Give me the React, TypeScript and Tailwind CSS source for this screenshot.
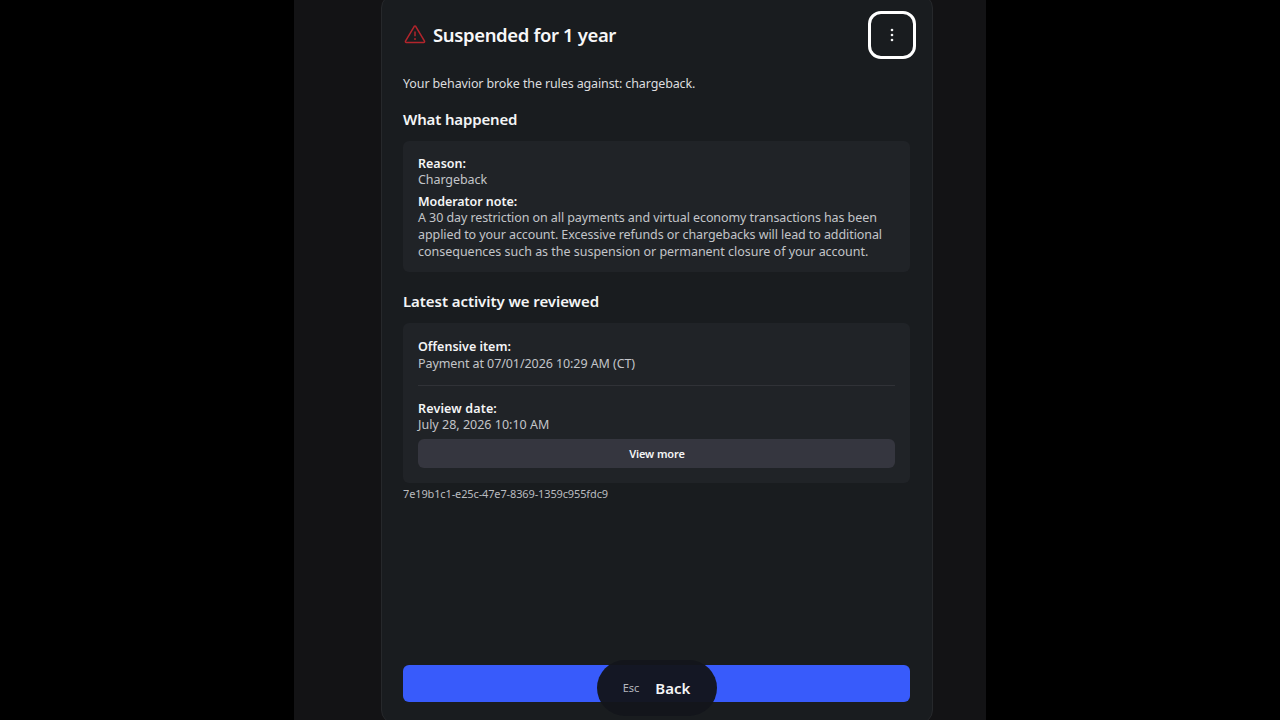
interface DetailProps {
  label: string;
  labelClass?: string;
  children: React.ReactNode;
}

function Detail({ label, labelClass = "", children }: DetailProps) {
  return (
    <div>
      <h3 className={`h-4 leading-4 font-semibold text-[#f4f5f6] ${labelClass}`}>{label}</h3>
      {children}
    </div>
  );
}

function WarningIcon() {
  return (
    <svg className="h-[22px] w-[22px] shrink-0" viewBox="0 0 22 22" fill="none" stroke="#b3252c" strokeWidth="1.5">
      <path d="M10.3 2.3a.85.85 0 0 1 1.4 0l8.8 14.9a.9.9 0 0 1-.8 1.3H2.3a.9.9 0 0 1-.8-1.3z" strokeLinejoin="round" />
      <path d="M11 7.4v4.9" />
      <circle cx="11" cy="15" r=".95" fill="#b3252c" stroke="none" />
    </svg>
  );
}

function MoreButton() {
  return (
    <button className="flex h-12 w-12 items-center justify-center rounded-[13px] border-[3px] border-white" aria-label="More options">
      <svg className="h-4 w-4" viewBox="0 0 16 16" fill="#f4f5f6">
        <circle cx="8" cy="3" r="1.3" />
        <circle cx="8" cy="8" r="1.3" />
        <circle cx="8" cy="13" r="1.3" />
      </svg>
    </button>
  );
}

export default function App() {
  return (
    <div className="flex h-screen justify-center overflow-hidden bg-black font-['Noto_Sans',sans-serif] text-[12.5px] text-[#c3c5c9]">
      <div className="flex w-[692px] bg-[#131315] pl-[87px]">
        <main className="relative -mt-[6px] flex h-[730px] w-[552px] flex-col rounded-[14px] border border-[#26282b] bg-[#191c1f] pt-4 pr-[22px] pl-[21px]">
          <header className="-mr-[6px] flex h-12 items-center justify-between pl-px">
            <div className="flex items-center gap-[7px]">
              <WarningIcon />
              <h1 className="text-[18.5px] leading-6 font-semibold tracking-[-0.37px] text-[#f7f7f8]">Suspended for 1 year</h1>
            </div>
            <MoreButton />
          </header>

          <p className="mt-4 leading-[17px] tracking-[-0.12px] text-[#dcdddf]">
            Your behavior broke the rules against: chargeback.
          </p>

          <h2 className="mt-[17px] text-[15px] leading-5 font-semibold tracking-[-0.15px] text-[#f4f5f6]">What happened</h2>
          <section className="mt-3 flex h-[131px] flex-col gap-[6px] rounded-md bg-[#202327] px-[15px] pt-[15px]">
            <Detail label="Reason:">
              <p className="leading-4 tracking-[-0.08px]">Chargeback</p>
            </Detail>
            <Detail label="Moderator note:" labelClass="tracking-[-0.06px]">
              <p className="-mt-px leading-[17px] tracking-[-0.08px] whitespace-nowrap">
                A 30 day restriction on all payments and virtual economy transactions has been
                <br />
                applied to your account. Excessive refunds or chargebacks will lead to additional
                <br />
                <span className="tracking-[-0.02px]">
                  consequences such as the suspension or permanent closure of your account.
                </span>
              </p>
            </Detail>
          </section>

          <h2 className="mt-[19px] text-[15px] leading-5 font-semibold tracking-[-0.07px] text-[#f4f5f6]">
            Latest activity we reviewed
          </h2>
          <section className="mt-3 h-40 rounded-md bg-[#202327] px-[15px] pt-4">
            <Detail label="Offensive item:">
              <p className="leading-[18px] tracking-[-0.08px]">Payment at 07/01/2026 10:29 AM (CT)</p>
            </Detail>
            <hr className="mt-3 mb-[15px] border-[#303237]" />
            <Detail label="Review date:" labelClass="tracking-[0.15px]">
              <p className="leading-4">July 28, 2026 10:10 AM</p>
            </Detail>
            <button className="mt-[6px] h-[29px] w-full rounded-md bg-[#35363f] pt-[2px] pl-px text-[11px] font-semibold tracking-[-0.1px] text-[#f4f5f6]">
              View more
            </button>
          </section>

          <p className="mt-[3px] text-[11px] leading-4 tracking-[-0.13px] text-[#b9bbbf]">
            7e19b1c1-e25c-47e7-8369-1359c955fdc9
          </p>

          <button className="mt-[163px] h-[37px] w-full shrink-0 rounded-md bg-[#385bfb]" aria-label="Continue" />

          {/* key hint floats over the primary button */}
          <div className="absolute top-[665px] left-[215px] flex h-[56px] w-[120px] items-center justify-center gap-4 rounded-[28px] bg-[#13151b]/96 pr-px">
            <span className="text-[11px] text-[#b4b6bd]">Esc</span>
            <span className="text-[15px] font-semibold text-[#f4f5f6]">Back</span>
          </div>
        </main>
      </div>
    </div>
  );
}
